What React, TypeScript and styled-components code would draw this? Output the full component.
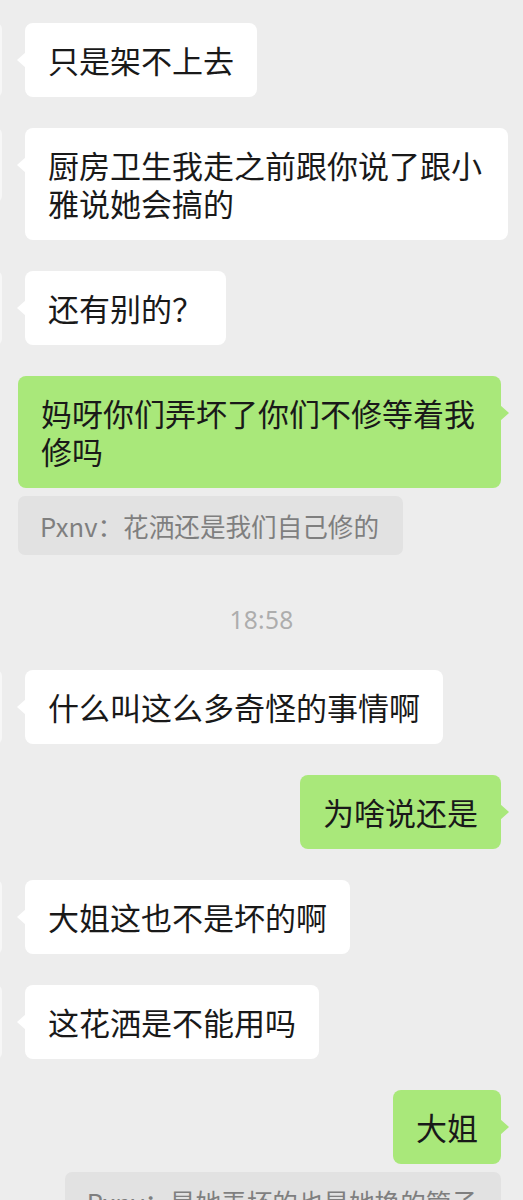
import styled, { createGlobalStyle } from 'styled-components';

const Global = createGlobalStyle`
  html, body {
    margin: 0;
    padding: 0;
    background: #ededed;
  }
  body {
    font-family: "Noto Sans CJK SC", "Noto Sans", sans-serif;
    overflow: hidden;
  }
`

const Chat = styled.main`
  display: flex;
  flex-direction: column;
  padding: 23px 0 0;
  width: 523px;
  overflow: hidden;
`

const Row = styled.div<{ $mine?: boolean }>`
  display: flex;
  justify-content: ${p => (p.$mine ? 'flex-end' : 'flex-start')};
  align-items: flex-start;
  margin-top: 31px;
  padding-right: ${p => (p.$mine ? '22px' : '0')};
  &:first-child { margin-top: 0; }
`

// avatar sits mostly off the left edge, only a sliver shows
const Avatar = styled.div`
  flex: none;
  width: 74px;
  height: 74px;
  margin-left: -72px;
  margin-right: 23px;
  border-radius: 6px;
  background: #f7f7f7;
`

const Stack = styled.div`
  display: flex;
  flex-direction: column;
  align-items: flex-end;
`

const Bubble = styled.div<{ $mine?: boolean }>`
  position: relative;
  box-sizing: border-box;
  max-width: 483px;
  padding: 18px 23px 18px 23px;
  border-radius: 8px;
  background: ${p => (p.$mine ? '#a9e87a' : '#ffffff')};
  color: #191919;
  font-size: 31px;
  line-height: 38px;
  word-break: break-all;

  &::before {
    content: '';
    position: absolute;
    top: 29px;
    ${p => (p.$mine ? 'right: -8px;' : 'left: -8px;')}
    border-top: 8px solid transparent;
    border-bottom: 8px solid transparent;
    ${p =>
      p.$mine
        ? 'border-left: 9px solid #a9e87a;'
        : 'border-right: 9px solid #ffffff;'}
  }
`

const Quote = styled.div`
  align-self: flex-start;
  box-sizing: border-box;
  max-width: 440px;
  margin-top: 8px;
  padding: 12px 24px 12px 22px;
  border-radius: 7px;
  background: #e2e2e2;
  color: #7f7f7f;
  font-size: 25.6px;
  line-height: 35px;
`

const Stamp = styled.div`
  margin: 50px 0 4px;
  text-align: center;
  color: #adadad;
  font-family: "Noto Sans", sans-serif;
  font-size: 24.5px;
  line-height: 30px;
  letter-spacing: 0.3px;
`

type Msg =
  | { kind: 'in'; text: string }
  | { kind: 'out'; text: string; quote?: string }
  | { kind: 'time'; text: string }

const messages: Msg[] = [
  { kind: 'in', text: '只是架不上去' },
  { kind: 'in', text: '厨房卫生我走之前跟你说了跟小雅说她会搞的' },
  { kind: 'in', text: '还有别的？' },
  { kind: 'out', text: '妈呀你们弄坏了你们不修等着我修吗', quote: 'Pxnv：花洒还是我们自己修的' },
  { kind: 'time', text: '18:58' },
  { kind: 'in', text: '什么叫这么多奇怪的事情啊' },
  { kind: 'out', text: '为啥说还是' },
  { kind: 'in', text: '大姐这也不是坏的啊' },
  { kind: 'in', text: '这花洒是不能用吗' },
  { kind: 'out', text: '大姐', quote: 'Pxnv：是她弄坏的也是她换的管子' },
]

function App() {
  return (
    <>
      <Global />
      <Chat>
        {messages.map((m, i) => {
          if (m.kind === 'time') return <Stamp key={i}>{m.text}</Stamp>
          if (m.kind === 'in')
            return (
              <Row key={i}>
                <Avatar />
                <Bubble>{m.text}</Bubble>
              </Row>
            )
          return (
            <Row key={i} $mine>
              <Stack>
                <Bubble $mine>{m.text}</Bubble>
                {m.quote && <Quote>{m.quote}</Quote>}
              </Stack>
            </Row>
          )
        })}
      </Chat>
    </>
  )
}

export default App;
